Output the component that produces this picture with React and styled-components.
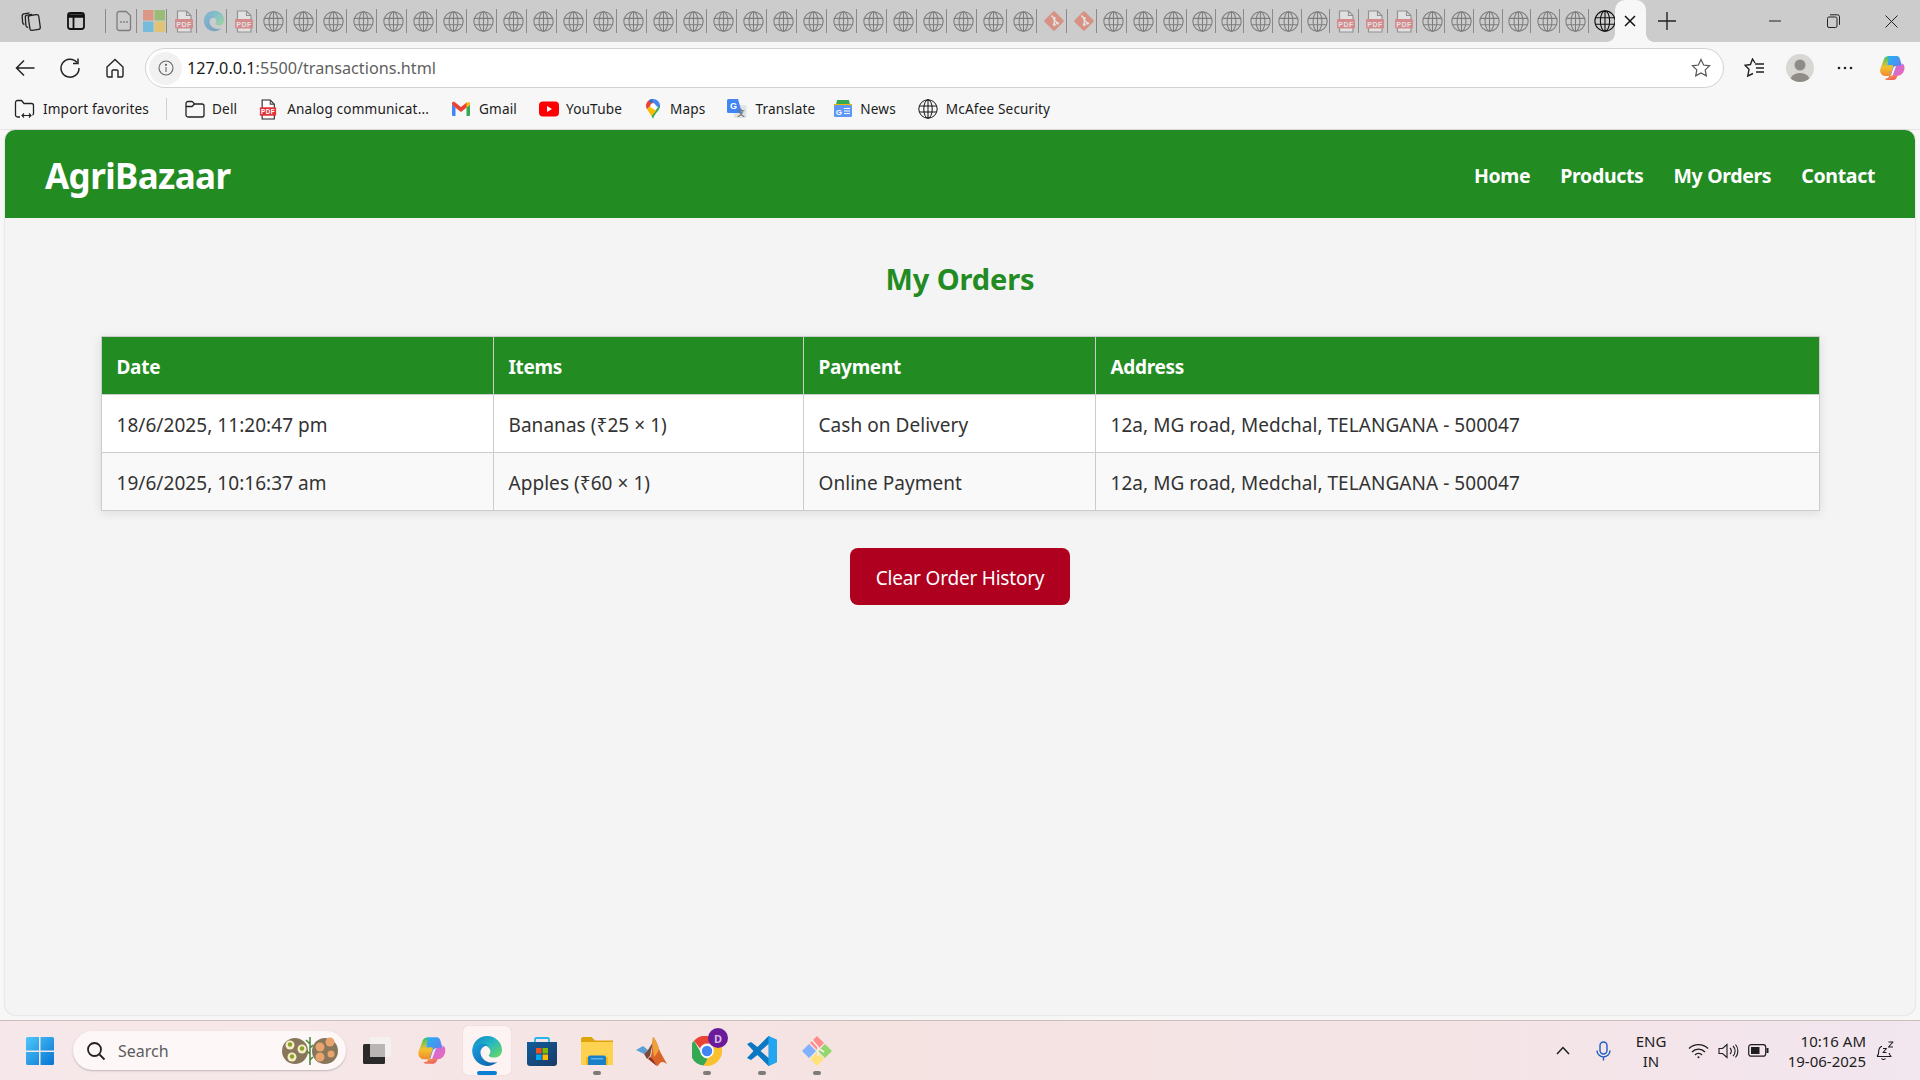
import React from "react";
import styled, { createGlobalStyle } from "styled-components";

const FONT = `"Noto Sans", "Open Sans", "Liberation Sans", sans-serif`;

const Global = createGlobalStyle`
  html, body { margin: 0; padding: 0; height: 100%; overflow: hidden; background: #f7f7f7; }
  * { box-sizing: border-box; }
  body { font-family: ${FONT}; }
`;

const Screen = styled.div`
  width: 1920px; height: 1080px; display: flex; flex-direction: column; background: #f7f7f7;
`;

/* ---------- tab strip ---------- */
const TabStrip = styled.div`
  height: 42px; flex: none; display: flex; align-items: center; background: #cccccc; position: relative;
`;
const StripButtons = styled.div`
  display: flex; align-items: center; padding-left: 8px; width: 105px; flex: none; height: 100%;
`;
const StripButton = styled.div`
  width: 45px; height: 42px; display: flex; align-items: center; justify-content: center; color: #1a1a1a;
`;
const LeadDivider = styled.div`
  width: 1px; height: 24px; background: #8a8a8a; flex: none; margin-right: 1px;
`;
const Tab = styled.div`
  width: ${p => p.$w}px; height: 24px; flex: none; display: flex; align-items: center; justify-content: center;
  padding-left: ${p => (p.$active ? 5 : 4)}px;
  border-right: ${p => (p.$active ? "none" : "1px solid #8a8a8a")};
  & > svg { opacity: ${p => (p.$active ? 1 : 0.42)}; flex: none; }
`;
const ActiveTab = styled.div`
  width: 31px; height: 42px; flex: none; margin-left: -1px; background: #f7f7f7; border-radius: 10px 10px 0 0;
  display: flex; align-items: center; justify-content: center; position: relative; color: #111;
  &::before, &::after {
    content: ""; position: absolute; bottom: 0; width: 8px; height: 8px;
    background: radial-gradient(circle at var(--cx) 0, #cccccc 7.5px, #f7f7f7 8px);
  }
  &::before { left: -8px; --cx: 0; }
  &::after { right: -8px; --cx: 100%; }
`;
const NewTab = styled.div`
  width: 24px; height: 24px; margin-left: 9px; display: flex; align-items: center; justify-content: center; color: #222;
`;
const WindowControls = styled.div`
  margin-left: auto; display: flex; align-items: center; padding-right: 0; color: #222;
`;
const WindowButton = styled.div`
  width: 58px; height: 42px; display: flex; align-items: center; justify-content: center;
`;

/* ---------- toolbar ---------- */
const Toolbar = styled.div`
  height: 46px; flex: none; display: flex; align-items: center; background: #f7f7f7; padding: 6px 0 0 2px; color: #222;
`;
const NavButton = styled.div`
  width: 45px; height: 36px; flex: none; display: flex; align-items: center; justify-content: center;
`;
const AddressBar = styled.div`
  width: 1579px; height: 40px; flex: none; margin-left: ${p => p.$ml || 0}px; border: 1px solid #d2d2d2; border-radius: 20px; background: #fff;
  display: flex; align-items: center; padding: 0 12px 0 3px;
`;
const InfoChip = styled.div`
  width: 33px; height: 33px; border-radius: 50%; background: #f1f1f1; display: flex; align-items: center; justify-content: center; flex: none; color: #666;
`;
const Url = styled.div`
  margin-left: 5px; font-size: 16.2px; letter-spacing: 0; color: #5f5f5f; white-space: nowrap;
  & > b { font-weight: 400; color: #1a1a1a; }
`;
const StarSlot = styled.div`
  margin-left: auto; display: flex; align-items: center; color: #555;
`;
const ToolGroup = styled.div`
  display: flex; align-items: center; margin-left: 8px;
`;
const ToolButton = styled.div`
  width: ${p => p.$w ?? 45.5}px; height: 36px; display: flex; align-items: center; justify-content: center; color: #222;
`;
const Avatar = styled.div`
  width: 28px; height: 28px; border-radius: 50%; background: #d9d7d3; overflow: hidden; display: flex; align-items: flex-end; justify-content: center;
`;

/* ---------- bookmarks ---------- */
const Bookmarks = styled.div`
  height: 42px; flex: none; display: flex; align-items: center; background: #f7f7f7; padding: 1px 0 0 14px;
  border-bottom: 1px solid #e6e6e6;
`;
const Bookmark = styled.div`
  display: flex; align-items: center; gap: ${p => p.$gap ?? 8}px; margin-right: ${p => p.$mr ?? 20}px;
  font-size: 13.6px; letter-spacing: 0.15px; color: #1c1c1c; white-space: nowrap; line-height: 20px;
`;
const BookDivider = styled.div`
  width: 1px; height: 22px; background: #cfcfcf; margin-right: 18px;
`;

/* ---------- page ---------- */
const Frame = styled.div`
  flex: 1; min-height: 0; padding: 0 5px 5px; background: #f7f7f7; display: flex;
`;
const Page = styled.div`
  flex: 1; display: flex; flex-direction: column; background: #f4f4f4; border-radius: 10px; overflow: hidden;
  box-shadow: 0 0 2px rgba(0,0,0,.22);
`;
const Header = styled.header`
  height: 88px; flex: none; background: #228b22; display: flex; align-items: center; justify-content: space-between; padding: 0 40px; color: #fff;
`;
const Logo = styled.div`
  font-size: 35px; font-weight: 700; letter-spacing: -0.6px; line-height: 1; padding-top: 3px;
`;
const Nav = styled.nav`
  display: flex; gap: 30px; padding-top: 3px;
`;
const NavLink = styled.a`
  font-size: 19.5px; font-weight: 700; letter-spacing: -0.34px; color: #fff; text-decoration: none;
`;
const Main = styled.main`
  flex: 1; padding-top: 41px;
`;
const Title = styled.h2`
  margin: 0 0 38px; text-align: center; font-size: 29px; line-height: 39px; font-weight: 700; color: #228b22; letter-spacing: -0.1px;
`;
const Table = styled.table`
  width: 1719px; margin: 0 auto; border-collapse: collapse; table-layout: fixed; background: #fff;
  box-shadow: 0 2px 10px rgba(0,0,0,.1); border: 1px solid #ccc;
`;
const Th = styled.th`
  width: ${p => (p.$w ? p.$w + "px" : "auto")}; height: 57.5px; padding: 3px 15px 0; background: #228b22; color: #fff; text-align: left;
  font-size: 19px; font-weight: 700; letter-spacing: -0.3px; border: 1px solid #ccc;
`;
const Row = styled.tr`
  background: ${p => (p.$alt ? "#f9f9f9" : "#fff")};
`;
const Td = styled.td`
  height: 58px; padding: 3px 15px 0; font-size: 19px; letter-spacing: 0.05px; color: #333; border: 1px solid #ccc; white-space: nowrap;
`;
const ClearButton = styled.button`
  display: block; margin: 37.5px auto 0; width: 220px; height: 57px; border: none; border-radius: 8px; background: #b00020; color: #fff;
  font-family: ${FONT}; font-size: 19px; letter-spacing: -0.2px; padding: 2px 0 0;
`;

/* ---------- taskbar ---------- */
const Taskbar = styled.div`
  height: 60px; flex: none; display: flex; align-items: center; position: relative;
  background: linear-gradient(90deg, #f6e8ea 0%, #f5e3e2 45%, #f5e4e6 75%, #f2e6ef 100%); border-top: 1px solid #cdbdbd;
`;
const StartSlot = styled.div`
  width: 73px; flex: none; display: flex; justify-content: center; padding-left: 7px;
`;
const SearchPill = styled.div`
  width: 273px; height: 39px; flex: none; border-radius: 20px; background: #fdf7f8; box-shadow: 0 1px 2px rgba(0,0,0,.22);
  display: flex; align-items: center; padding-left: 13px; font-size: 16px; color: #5c5c5c; position: relative;
`;
const SearchLabel = styled.span`
  margin-left: 12px; letter-spacing: 0;
`;
const SearchArt = styled.div`
  margin-left: auto; margin-right: 8px; display: flex;
`;
const TaskIcons = styled.div`
  display: flex; align-items: center; margin-left: 3px;
`;
const TaskItem = styled.div`
  width: 55px; height: 49px; display: flex; align-items: center; justify-content: center; position: relative;
  &::after {
    content: ""; display: ${p => (p.$dot || p.$active ? "block" : "none")};
    position: absolute; left: 50%; bottom: 0; height: 4px; transform: translateX(-50%);
    width: ${p => (p.$active ? 20 : 8)}px; border-radius: 2px; background: ${p => (p.$active ? "#0a7fd6" : "#7d7a7a")};
  }
  ${p => p.$active ? `&::before { content: ""; position: absolute; left: 3.5px; right: 3.5px; top: 0; bottom: 0; background: #fdf3f3; border-radius: 5px; box-shadow: 0 0 1px rgba(0,0,0,.2); }` : ""}
  & > * { position: relative; z-index: 1; }
`;
const Badge = styled.span`
  position: absolute !important; right: 6px; top: 2px; width: 20px; height: 20px; border-radius: 50%; background: #6a1b9a; color: #d9b8e8;
  font-size: 11px; font-weight: 700; display: flex; align-items: center; justify-content: center;
`;
const Tray = styled.div`
  margin-left: auto; display: flex; align-items: center; color: #1d1d1d; padding-right: 16px;
`;
const TrayIcon = styled.div`
  width: ${p => p.$w}px; display: flex; align-items: center; justify-content: center;
`;
const Lang = styled.div`
  width: 64px; text-align: center; font-size: 15px; line-height: 20px;
`;
const Clock = styled.div`
  width: 93px; text-align: right; font-size: 15px; line-height: 20px;
`;

/* ---------- icons ---------- */
const Globe = ({ s = 20, c = "#111" }) => (
  <svg width={s} height={s} viewBox="0 0 20 20" fill="none" stroke={c} strokeWidth="1">
    <circle cx="10" cy="10" r="9.200" /><ellipse cx="10" cy="10" rx="4.200" ry="9.200" />
    <path d="M10 .8v18.400M1.500 7h17M1.500 13h17" />
  </svg>
);
const Pdf = ({ s = 20, solid }) => (
  <svg width={s} height={s + 3} viewBox="0 0 20 23">
    <path d="M3.500 1h9L17 5.500V22H3.500z" fill="#fff" stroke={solid ? "#222" : "#444"} strokeWidth="1.200" />
    <path d="M12.500 1v4.500H17" fill="none" stroke="#444" strokeWidth="1.200" />
    <rect x="1" y="9" width="18" height="9.500" rx="1" fill="#e0343a" />
    <text x="10" y="16.500" textAnchor="middle" fontSize="7" fontWeight="700" fill="#fff" fontFamily="Liberation Sans" letterSpacing="0.5">PDF</text>
  </svg>
);
const GroupTab = () => (
  <svg width="20" height="22" viewBox="0 0 20 22" fill="none" stroke="#111" strokeWidth="1.300">
    <path d="M5 1.500h7l4.500 4v13a2 2 0 0 1-2 2h-9a2.500 2.500 0 0 1-2.500-2.500V4A2.500 2.500 0 0 1 5 1.500z" />
    <path d="M7 12h.01M10 12h.01M13 12h.01" strokeWidth="1.800" strokeLinecap="round" />
  </svg>
);
const MsTab = () => (
  <svg width="22" height="22" viewBox="0 0 22 22">
    <rect width="10.500" height="10.500" fill="#f25022" /><rect x="11.500" width="10.500" height="10.500" fill="#5aa800" />
    <rect y="11.500" width="10.500" height="10.500" fill="#00a4ef" /><rect x="11.500" y="11.500" width="10.500" height="10.500" fill="#ffb900" />
  </svg>
);
const GitTab = () => (
  <svg width="22" height="22" viewBox="0 0 22 22">
    <rect x="3.700" y="3.700" width="14.600" height="14.600" rx="1.500" fill="#e8431f" transform="rotate(45 11 11)" />
    <path d="M8.300 5.400l3 3v6M11.300 10l3.300 3.300" stroke="#fff" strokeWidth="1.400" fill="none" />
    <circle cx="11.300" cy="14.600" r="1.500" fill="#fff" /><circle cx="11.300" cy="8.500" r="1.400" fill="#fff" /><circle cx="14.600" cy="13.300" r="1.400" fill="#fff" />
  </svg>
);
const EdgeIcon = ({ s = 24, id = "e" }) => (
  <svg width={s} height={s} viewBox="0 0 32 32">
    <defs>
      <linearGradient id={id + "a"} x1="0" y1="0" x2="1" y2="1"><stop offset="0" stopColor="#0c7fc9" /><stop offset=".45" stopColor="#23b5c6" /><stop offset="1" stopColor="#6fdc5a" /></linearGradient>
      <linearGradient id={id + "b"} x1="0" y1="0" x2="1" y2="1"><stop offset="0" stopColor="#1aa0de" /><stop offset="1" stopColor="#0a5fa8" /></linearGradient>
    </defs>
    <path fill={`url(#${id}a)`} d="M1.200 14.600C2.300 6.600 8.400 1 16 1c8.600 0 15 6.400 15 14 0 4.600-3.200 7.600-7.600 7.600-2.600 0-4.600-.7-5.400-1.700-.4-.5-.2-.9.2-1.300.7-.7 1.200-1.800 1.200-3 0-3.200-3.200-6.400-8-6.400-4.800 0-8.600 1.800-10.200 4.400z" />
    <path fill={`url(#${id}b)`} d="M1.200 14.600C4 10 8 8.800 11.500 8.800c3.500 0 5.600 1.500 5.600 1.500-5.500.5-7.600 4.300-7.600 7.200 0 5.400 5 10.400 12.200 10.400 1.800 0 3.300-.3 4.800-.9-2.700 2.400-6.300 3.900-10.400 3.900C7.400 30.900.7 23.500 1.200 14.600z" />
    <path fill="#0b4f8f" d="M9.500 17.500c0 5.400 5 10.400 12.200 10.400 1.800 0 3.300-.3 4.800-.9-3.400 1-11 1.200-14.600-3.600-1.600-2.100-2.400-3.900-2.400-5.900z" />
  </svg>
);
const CopilotIcon = ({ s = 26, id = "c" }) => (
  <svg width={s} height={s} viewBox="0 0 28 28">
    <defs>
      <linearGradient id={id + "1"} x1="0" y1="0" x2="1" y2="1"><stop offset="0" stopColor="#1fb6f5" /><stop offset=".55" stopColor="#4f8ef0" /><stop offset="1" stopColor="#9a5fe0" /></linearGradient>
      <linearGradient id={id + "2"} x1="0" y1="0" x2="0" y2="1"><stop offset="0" stopColor="#37c26b" /><stop offset=".55" stopColor="#f5c030" /><stop offset="1" stopColor="#f08a2c" /></linearGradient>
      <linearGradient id={id + "3"} x1="0" y1="0" x2="1" y2="1"><stop offset="0" stopColor="#c06be8" /><stop offset="1" stopColor="#f06ab0" /></linearGradient>
      <linearGradient id={id + "4"} x1="0" y1="0" x2="1" y2="1"><stop offset="0" stopColor="#f7a33c" /><stop offset="1" stopColor="#ef4d6a" /></linearGradient>
    </defs>
    <path fill={`url(#${id}1)`} d="M9.500 2h9.200c1.800 0 2.700 1.200 3.200 2.800L24 12h-5.500c-2.200 0-3 1.200-3.600 3L13 21H9z" />
    <path fill={`url(#${id}2)`} d="M8.800 2.500C7 3 6.200 4.200 5.600 6L2.600 14c-1.400 4 .6 7.800 4.600 8H12l3-9c.6-1.600 0-2-1.600-2H9l1.600-6c.2-1-.6-2.800-1.800-2.500z" />
    <path fill={`url(#${id}3)`} d="M24 9.500c2.600 1 2.800 4 2.200 6.600-.8 3.400-2.800 5.600-6.700 5.900H14.500l3-8.400c.5-1.400 1.300-2 2.600-2H24z" />
    <path fill={`url(#${id}4)`} d="M11.500 21.500h8c-.6 2.400-1.800 4.500-4.500 4.500H9.600c-1.400 0-2.200-.5-2.800-1.500 1.400.1 3.800-.3 4.700-3z" />
  </svg>
);
const GmailIcon = () => (
  <svg width="20" height="16" viewBox="0 0 20 16">
    <path d="M1 3.500V14a1 1 0 0 0 1 1h2.500V6.500z" fill="#4285f4" /><path d="M19 3.500V14a1 1 0 0 1-1 1h-2.500V6.500z" fill="#34a853" />
    <path d="M1 3.500V2.400C1 1 2.600.3 3.600 1.100L10 6l6-4.700v5L10 11 4.500 6.800z" fill="#ea4335" />
    <path d="M15.500 2.200l1-.8C17.600.5 19 1.200 19 2.500v1.300l-3.500 2.700z" fill="#fbbc04" />
  </svg>
);
const YouTubeIcon = () => (
  <svg width="20" height="16" viewBox="0 0 20 16"><rect width="20" height="15" y=".5" rx="4" fill="#f00" /><path d="M8 5l5 3-5 3z" fill="#fff" /></svg>
);
const MapsIcon = () => (
  <svg width="16" height="22" viewBox="0 0 16 22">
    <path d="M8 1C4 1 1 4 1 7.800c0 1.400.4 2.400 1.100 3.500L8 5.200z" fill="#ea4335" />
    <path d="M8 1c-1.500 0-3 .5-4 1.500l3 3z" fill="#1a73e8" />
    <path d="M8 1c3.900 0 7 3 7 6.800 0 .9-.2 1.700-.5 2.400L8 5.200z" fill="#4285f4" />
    <path d="M14.500 10.200C13 13.600 9.400 16 8 21c-.3-1-.8-2-1.400-2.900L14.500 7z" fill="#34a853" />
    <path d="M2.100 11.300c1 1.900 2.900 4.300 4.500 6.800L11 13 5 8z" fill="#fbbc04" />
    <circle cx="8" cy="7.800" r="2.600" fill="#fff" />
  </svg>
);
const TranslateIcon = () => (
  <svg width="20" height="20" viewBox="0 0 20 20">
    <rect x="7" y="6" width="12.500" height="13" rx="1.500" fill="#e3e3e3" />
    <path d="M1.500 0h9.500l4 14H1.500A1.500 1.500 0 0 1 0 12.500v-11A1.500 1.500 0 0 1 1.500 0z" fill="#4285f4" />
    <text x="6.500" y="10" textAnchor="middle" fontSize="9" fontWeight="700" fill="#fff" fontFamily="Liberation Sans">G</text>
    <text x="14" y="16.500" textAnchor="middle" fontSize="7.500" fontWeight="700" fill="#777" fontFamily="Noto Sans CJK SC">文</text>
  </svg>
);
const NewsIcon = () => (
  <svg width="20" height="20" viewBox="0 0 20 20">
    <path d="M4 1h12l1 5H3z" fill="#34a853" /><path d="M1 5h18v3H1z" fill="#f6b704" />
    <rect x="1" y="6" width="18" height="12" rx="1.500" fill="#5e97f6" />
    <text x="6" y="15.500" textAnchor="middle" fontSize="8" fontWeight="700" fill="#fff" fontFamily="Liberation Sans">G</text>
    <path d="M11 9.500h6M11 12h6M11 14.500h6" stroke="#fff" strokeWidth="1.200" />
  </svg>
);
const ImportFav = () => (
  <svg width="21" height="20" viewBox="0 0 21 20" fill="none" stroke="#222" strokeWidth="1.300">
    <path d="M6 18H3.500A2 2 0 0 1 1.500 16V3.500a2 2 0 0 1 2-2h4l2.500 3h7.500a2 2 0 0 1 2 2v8a2 2 0 0 1-1 1.700" />
    <path d="M8 16.500h9M10 14.500l-2 2 2 2M15 14.500l2 2-2 2" strokeWidth="1.100" />
  </svg>
);
const Folder = () => (
  <svg width="20" height="18" viewBox="0 0 20 18" fill="none" stroke="#222" strokeWidth="1.300">
    <path d="M1 3.500a2 2 0 0 1 2-2h3.600c.5 0 1 .2 1.300.6L9.500 4H17a2 2 0 0 1 2 2v9a2 2 0 0 1-2 2H3a2 2 0 0 1-2-2z" />
    <path d="M1 6.500L7 6.500 9.500 4" />
  </svg>
);
const WinLogo = () => (
  <svg width="30" height="30" viewBox="0 0 30 30">
    <defs><linearGradient id="w" x1="0" y1="0" x2="1" y2="1"><stop offset="0" stopColor="#4fc8fb" /><stop offset="1" stopColor="#0673d1" /></linearGradient></defs>
    <path fill="url(#w)" d="M1 2.500A1.500 1.500 0 0 1 2.500 1H14v13.500H1zM15.500 1H27.500A1.500 1.500 0 0 1 29 2.500V14.500H15.500zM1 16h13v13H2.500A1.500 1.500 0 0 1 1 27.500zM15.500 16H29v11.500A1.500 1.500 0 0 1 27.500 29H15.500z" />
  </svg>
);
const FoodArt = () => (
  <svg width="56" height="30" viewBox="0 0 56 30">
    <circle cx="13" cy="15" r="13" fill="#87765a" /><circle cx="43" cy="15" r="13" fill="#87765a" />
    <g fill="#f5ecc8"><circle cx="8" cy="9" r="4.500" /><circle cx="20" cy="13" r="4.500" /><circle cx="10" cy="21" r="4.500" /></g>
    <g fill="#8aa327"><circle cx="8" cy="8.500" r="2.200" /><circle cx="20" cy="12.500" r="2.200" /><circle cx="10" cy="20.500" r="2.200" /></g>
    <g fill="#e8a46c"><circle cx="48" cy="6" r="4.500" /><circle cx="38" cy="11" r="4.500" /><circle cx="38" cy="21" r="4.500" /><circle cx="49" cy="18" r="3.500" /></g>
    <path d="M28 1v28M28 8l-4-4M28 12l3-3M28 18l-3-3M28 24l3-3" stroke="#4f8a3a" strokeWidth="1.600" fill="none" />
  </svg>
);
const TaskView = () => (
  <svg width="30" height="30" viewBox="0 0 30 30">
    <rect x="1" y="8" width="22" height="20" rx="1.500" fill="#2a2a2a" />
    <rect x="8" y="1" width="21" height="20" rx="1" fill="#f4f1f1" fillOpacity=".85" />
    <rect x="8" y="8" width="15" height="13" fill="#b9b5b5" />
  </svg>
);
const StoreIcon = () => (
  <svg width="30" height="30" viewBox="0 0 30 30">
    <defs><linearGradient id="st" x1="0" y1="0" x2="1" y2="1"><stop offset="0" stopColor="#0f5d9c" /><stop offset="1" stopColor="#1c3a66" /></linearGradient></defs>
    <path d="M8 6V3.500A1.500 1.500 0 0 1 9.500 2h11A1.500 1.500 0 0 1 22 3.500V6" fill="none" stroke="#28b4ee" strokeWidth="1.800" />
    <path d="M0 6h30v21a3 3 0 0 1-3 3H3a3 3 0 0 1-3-3z" fill="url(#st)" />
    <rect x="9" y="12" width="5.500" height="5.500" fill="#f25022" /><rect x="15.500" y="12" width="5.500" height="5.500" fill="#7fba00" />
    <rect x="9" y="18.500" width="5.500" height="5.500" fill="#00a4ef" /><rect x="15.500" y="18.500" width="5.500" height="5.500" fill="#ffb900" />
  </svg>
);
const ExplorerIcon = () => (
  <svg width="32" height="28" viewBox="0 0 32 28">
    <path d="M0 2a2 2 0 0 1 2-2h8.500l3.500 3.500h18V8H0z" fill="#dfa30b" />
    <path d="M0 5h32v23H0z" fill="#fcd250" />
    <rect x="5" y="20" width="22" height="8" fill="#f9b617" />
    <path d="M7 20.500a2 2 0 0 1 2-2h14a2 2 0 0 1 2 2V28H7z" fill="#1a7fc9" />
    <rect x="10" y="21" width="12" height="1.500" fill="#5cb4ea" />
  </svg>
);
const MatlabIcon = () => (
  <svg width="32" height="30" viewBox="0 0 32 30">
    <path d="M0 14l7-4 5 4-4 4z" fill="#5aa0d8" />
    <path d="M8 18l4-4 5-8-3 14-3 3z" fill="#7a4a3c" />
    <path d="M17 1c2 1 4 6 6 12 2 5 6 11 8 15-3-2-5-3-7-1-1 1-2 3-3 3-2-3-5-7-7-8 3-5 2-17 3-21z" fill="#d9642a" />
    <path d="M17 1c2 1 4 6 6 12-1 3-3 6-5 8-1-6-2-15-1-20z" fill="#f0a13a" />
    <path d="M14 21c2 1 4 4 7 9-2-1-6-5-9-7z" fill="#8e2f1e" />
  </svg>
);
const ChromeIcon = () => (
  <svg width="30" height="30" viewBox="0 0 30 30">
    <path d="M15 0a15 15 0 0 1 13 7.500H15a7.500 7.500 0 0 0-7 4.800L2 4.800A15 15 0 0 1 15 0z" fill="#ea4335" />
    <path d="M2 4.800l6.500 11.300a7.500 7.500 0 0 0 9 6.500L11.700 29.600A15 15 0 0 1 2 4.800z" fill="#34a853" />
    <path d="M28 7.500A15 15 0 0 1 11.700 29.600l6.500-11.300A7.500 7.500 0 0 0 20 7.500z" fill="#fbc02d" />
    <circle cx="15" cy="15" r="6" fill="#4285f4" stroke="#fff" strokeWidth="1.500" />
  </svg>
);
const VSCodeIcon = () => (
  <svg width="30" height="30" viewBox="0 0 30 30">
    <path d="M21.500 0L30 4v22l-8.500 4-11-11-6.500 5L0 22l6.500-7L0 8l4-2 6.500 5z" fill="#0a78c2" />
    <path d="M21.500 0L30 4v22l-8.500 4z" fill="#23a5ef" />
    <path d="M21.500 8l-8 7 8 7z" fill="#f4e3e3" />
  </svg>
);
const GitGui = () => (
  <svg width="32" height="32" viewBox="0 0 32 32">
    <path d="M16 1l7 7-7 7-7-7z" fill="#ff8b8b" /><path d="M1 16l7-7 7 7-7 7z" fill="#7fb1ff" />
    <path d="M31 16l-7-7-7 7 7 7z" fill="#93d66b" /><path d="M16 31l-7-7 7-7 7 7z" fill="#ffe27e" />
    <path d="M11 5l6 7v9M17 13l6 4" stroke="#f7eded" strokeWidth="1.600" fill="none" />
  </svg>
);

const buildTabs = () => {
  const kinds = ["group", "ms", "pdf", "edge", "pdf"];
  for (let i = 0; i < 26; i++) kinds.push("globe");
  kinds.push("git", "git");
  for (let i = 0; i < 3; i++) kinds.push("globe");
  const wide = kinds.map(k => ({ k, w: 30 }));
  const narrowKinds = ["globe","globe","globe","globe","globe","pdf","pdf","pdf","globe","globe","globe","globe","globe","globe"];
  return [...wide, ...narrowKinds.map(k => ({ k, w: 28.7 }))];
};
const renderTabIcon = k => {
  if (k === "group") return <GroupTab />;
  if (k === "ms") return <MsTab />;
  if (k === "pdf") return <Pdf />;
  if (k === "edge") return <EdgeIcon s={22} id="te" />;
  if (k === "git") return <GitTab />;
  return <Globe s={21} />;
};

const orders = [
  { date: "18/6/2025, 11:20:47 pm", items: "Bananas (₹25 × 1)", pay: "Cash on Delivery" },
  { date: "19/6/2025, 10:16:37 am", items: "Apples (₹60 × 1)", pay: "Online Payment" },
];

export default function App() {
  return (
    <Screen>
      <Global />
      <TabStrip>
        <StripButtons>
          <StripButton>
            <svg width="24" height="24" viewBox="0 0 24 24" fill="none" stroke="#222" strokeWidth="1.300" strokeLinejoin="round">
              <rect x="10" y="6" width="10.500" height="15" rx="2" transform="rotate(-8 15 13)" />
              <path d="M9.200 18.500C7.800 18.400 7 17.600 6.900 16.500L6.300 8.500C6.200 7.300 7 6.400 8.200 6.200L13 5.400" />
              <path d="M5.400 15.500C4.300 15.200 3.700 14.400 3.600 13.400L3.200 7.200C3.100 6 3.900 5.100 5 4.900L10.500 3.900" />
            </svg>
          </StripButton>
          <StripButton>
            <svg width="20" height="20" viewBox="0 0 20 20" fill="none" stroke="#111" strokeWidth="1.800">
              <rect x="2" y="2" width="16" height="16" rx="2.500" /><path d="M2 5h16" strokeWidth="3.500" /><path d="M7.500 6v12" />
            </svg>
          </StripButton>
        </StripButtons>
        <LeadDivider />
        {buildTabs().map((t, i) => (
          <Tab key={i} $w={t.w}>{renderTabIcon(t.k)}</Tab>
        ))}
        <Tab $w={27} $active><Globe s={22} c="#111" /></Tab>
        <ActiveTab>
          <svg width="12" height="12" viewBox="0 0 12 12" stroke="currentColor" strokeWidth="1.500"><path d="M1 1l10 10M11 1L1 11" /></svg>
        </ActiveTab>
        <NewTab>
          <svg width="18" height="18" viewBox="0 0 18 18" stroke="currentColor" strokeWidth="1.400"><path d="M9 0v18M0 9h18" /></svg>
        </NewTab>
        <WindowControls>
          <WindowButton><svg width="12" height="2" viewBox="0 0 12 2"><path d="M0 1h12" stroke="currentColor" strokeWidth="1" /></svg></WindowButton>
          <WindowButton>
            <svg width="13" height="14" viewBox="0 0 13 14" fill="none" stroke="currentColor" strokeWidth="1"><rect x=".5" y="3" width="9.500" height="10.500" rx="1.500" /><path d="M3 .8h7.500a2 2 0 0 1 2 2v8" /></svg>
          </WindowButton>
          <WindowButton><svg width="13" height="13" viewBox="0 0 13 13" stroke="currentColor" strokeWidth="1"><path d="M.5.500l12 12M12.500.500l-12 12" /></svg></WindowButton>
        </WindowControls>
      </TabStrip>

      <Toolbar>
        <NavButton>
          <svg width="20" height="18" viewBox="0 0 20 18" fill="none" stroke="currentColor" strokeWidth="1.500"><path d="M19.500 9H1.500M9 1.500L1.500 9 9 16.500" /></svg>
        </NavButton>
        <NavButton>
          <svg width="20" height="20" viewBox="0 0 20 20" fill="none" stroke="currentColor" strokeWidth="1.500"><path d="M17 4.500A9 9 0 1 0 19 10" /><path d="M18 .5v5h-5" /></svg>
        </NavButton>
        <NavButton>
          <svg width="20" height="20" viewBox="0 0 20 20" fill="none" stroke="currentColor" strokeWidth="1.400"><path d="M2 9l8-7.500L18 9v8.500a1.500 1.500 0 0 1-1.500 1.500H13v-6a1 1 0 0 0-1-1H8a1 1 0 0 0-1 1v6H3.500A1.500 1.500 0 0 1 2 17.500z" /></svg>
        </NavButton>
        <AddressBar $ml={8}>
          <InfoChip>
            <svg width="16" height="16" viewBox="0 0 16 16" fill="none" stroke="currentColor" strokeWidth="1.100"><circle cx="8" cy="8" r="7" /><path d="M8 7v5" /><circle cx="8" cy="4.800" r=".6" fill="currentColor" /></svg>
          </InfoChip>
          <Url><b>127.0.0.1</b>:5500/transactions.html</Url>
          <StarSlot>
            <svg width="20" height="20" viewBox="0 0 20 20" fill="none" stroke="currentColor" strokeWidth="1.200"><path d="M10 1.500l2.600 5.500 6 .8-4.400 4.100 1.100 6L10 15l-5.300 2.900 1.100-6L1.400 7.800l6-.8z" /></svg>
          </StarSlot>
        </AddressBar>
        <ToolGroup>
          <ToolButton>
            <svg width="21" height="20" viewBox="0 0 21 20" fill="none" stroke="currentColor" strokeWidth="1.400"><path d="M11 5L8.500 1 6.400 6.500 1 7.300l4 4L3.800 18 9 15.500" /><path d="M11 6h9M12 10h8M12 14h8" /></svg>
          </ToolButton>
          <ToolButton>
            <Avatar>
              <svg width="28" height="26" viewBox="0 0 28 26" fill="#8f8c87"><circle cx="14" cy="9" r="5.500" /><ellipse cx="14" cy="25" rx="10" ry="8" /></svg>
            </Avatar>
          </ToolButton>
          <ToolButton $w={44}>
            <svg width="16" height="4" viewBox="0 0 16 4" fill="currentColor"><circle cx="2" cy="2" r="1.300" /><circle cx="8" cy="2" r="1.300" /><circle cx="14" cy="2" r="1.300" /></svg>
          </ToolButton>
          <ToolButton $w={50}><CopilotIcon s={28} id="tc" /></ToolButton>
        </ToolGroup>
      </Toolbar>

      <Bookmarks>
        <Bookmark $mr={17}><ImportFav />Import favorites</Bookmark>
        <BookDivider />
        <Bookmark $mr={22} $gap={7}><Folder />Dell</Bookmark>
        <Bookmark $mr={22} $gap={10}><Pdf s={18} solid />Analog communicat...</Bookmark>
        <Bookmark $mr={22}><GmailIcon />Gmail</Bookmark>
        <Bookmark $mr={23} $gap={7}><YouTubeIcon />YouTube</Bookmark>
        <Bookmark $mr={22} $gap={9}><MapsIcon />Maps</Bookmark>
        <Bookmark $mr={18} $gap={8}><TranslateIcon />Translate</Bookmark>
        <Bookmark $mr={22} $gap={7}><NewsIcon />News</Bookmark>
        <Bookmark><Globe s={20} />McAfee Security</Bookmark>
      </Bookmarks>

      <Frame>
        <Page>
          <Header>
            <Logo>AgriBazaar</Logo>
            <Nav>
              <NavLink>Home</NavLink>
              <NavLink>Products</NavLink>
              <NavLink>My Orders</NavLink>
              <NavLink>Contact</NavLink>
            </Nav>
          </Header>
          <Main>
            <Title>My Orders</Title>
            <Table>
              <thead>
                <tr>
                  <Th $w={392}>Date</Th>
                  <Th $w={310}>Items</Th>
                  <Th $w={292}>Payment</Th>
                  <Th>Address</Th>
                </tr>
              </thead>
              <tbody>
                {orders.map((o, i) => (
                  <Row key={o.date} $alt={i === 1}>
                    <Td>{o.date}</Td>
                    <Td>{o.items}</Td>
                    <Td>{o.pay}</Td>
                    <Td>12a, MG road, Medchal, TELANGANA - 500047</Td>
                  </Row>
                ))}
              </tbody>
            </Table>
            <ClearButton>Clear Order History</ClearButton>
          </Main>
        </Page>
      </Frame>

      <Taskbar>
        <StartSlot><WinLogo /></StartSlot>
        <SearchPill>
          <svg width="20" height="20" viewBox="0 0 20 20" fill="none" stroke="#222" strokeWidth="1.800"><circle cx="8.500" cy="8.500" r="6.500" /><path d="M13.500 13.500L18.500 18.500" /></svg>
          <SearchLabel>Search</SearchLabel>
          <SearchArt><FoodArt /></SearchArt>
        </SearchPill>
        <TaskIcons>
          <TaskItem><TaskView /></TaskItem>
          <TaskItem><CopilotIcon s={31} id="bc" /></TaskItem>
          <TaskItem $active><EdgeIcon s={32} id="be" /></TaskItem>
          <TaskItem><StoreIcon /></TaskItem>
          <TaskItem $dot><ExplorerIcon /></TaskItem>
          <TaskItem><MatlabIcon /></TaskItem>
          <TaskItem $dot><ChromeIcon /><Badge>D</Badge></TaskItem>
          <TaskItem $dot><VSCodeIcon /></TaskItem>
          <TaskItem $dot><GitGui /></TaskItem>
        </TaskIcons>
        <Tray>
          <TrayIcon $w={48}>
            <svg width="14" height="9" viewBox="0 0 14 9" fill="none" stroke="currentColor" strokeWidth="1.500"><path d="M1 8l6-6.500L13 8" /></svg>
          </TrayIcon>
          <TrayIcon $w={32}>
            <svg width="15" height="20" viewBox="0 0 15 20" fill="none" stroke="#1f5fc0" strokeWidth="1.400"><rect x="4" y="1" width="7" height="12" rx="3.500" /><path d="M1 9.500a6.500 6.500 0 0 0 13 0M7.500 16v3.500" /></svg>
          </TrayIcon>
          <Lang>ENG<br />IN</Lang>
          <TrayIcon $w={30}>
            <svg width="21" height="16" viewBox="0 0 21 16" fill="none" stroke="currentColor" strokeWidth="1.300"><path d="M1 5.500a13.500 13.500 0 0 1 19 0M4 9a9 9 0 0 1 13 0M7 12a4.500 4.500 0 0 1 7 0" /><circle cx="10.500" cy="14.300" r="1" fill="currentColor" stroke="none" /></svg>
          </TrayIcon>
          <TrayIcon $w={30}>
            <svg width="21" height="16" viewBox="0 0 21 16" fill="none" stroke="currentColor" strokeWidth="1.100"><path d="M1 5.500h3.500L9 1.500v13L4.500 10.500H1z" /><path d="M12 5a4 4 0 0 1 0 6M15 3a7 7 0 0 1 0 10M17.500 1.500a10 10 0 0 1 0 13" /></svg>
          </TrayIcon>
          <TrayIcon $w={30}>
            <svg width="21" height="13" viewBox="0 0 21 13" fill="none" stroke="currentColor" strokeWidth="1.200"><rect x=".7" y=".7" width="17" height="11.500" rx="2.500" /><rect x="3" y="3" width="8.500" height="7" fill="currentColor" stroke="none" /><rect x="18.500" y="4" width="2" height="5" fill="currentColor" stroke="none" /></svg>
          </TrayIcon>
          <Clock>10:16 AM<br />19-06-2025</Clock>
          <TrayIcon $w={38}>
            <svg width="18" height="20" viewBox="0 0 18 20" fill="none" stroke="currentColor" strokeWidth="1.100" strokeLinejoin="round">
              <path d="M1 15.500c1.300-1.200 1.700-2.500 1.700-5 0-2.700 1.300-4.500 3.300-5.200M1 15.500h14c-1.100-1-1.600-2-1.800-3.500" />
              <path d="M5.500 17.500a2.500 2.500 0 0 0 4 0" />
              <path d="M7 7.500h3.500L7 11.500h3.500M12.500 1H17l-4.500 5H17" />
            </svg>
          </TrayIcon>
        </Tray>
      </Taskbar>
    </Screen>
  );
}
